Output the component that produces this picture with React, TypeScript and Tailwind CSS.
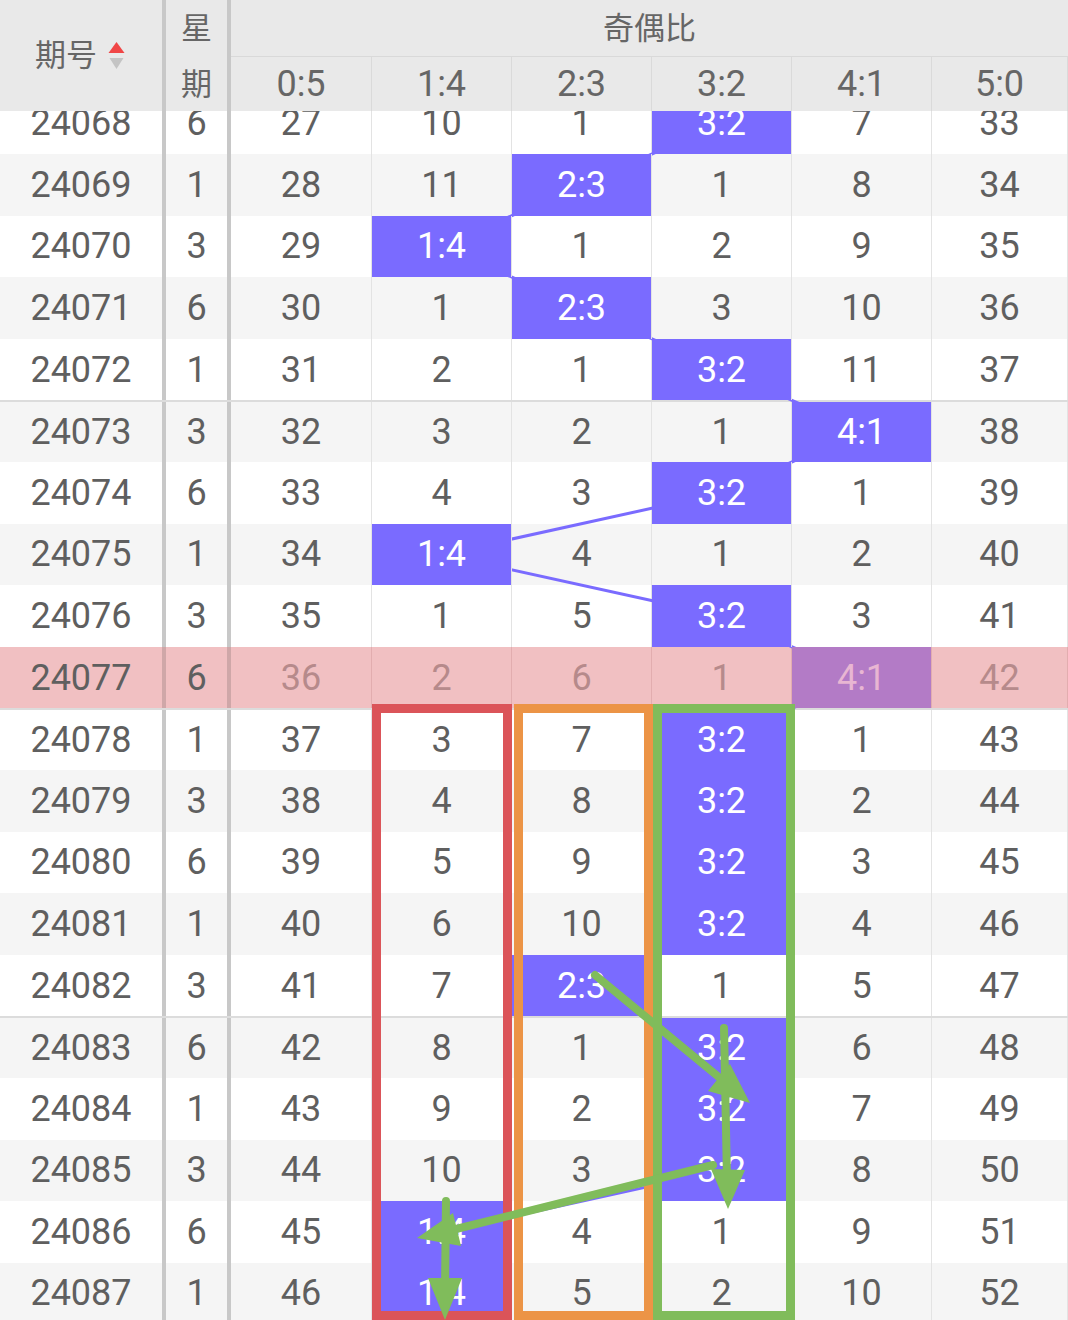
import React from 'react';

const LABELS = ['0:5', '1:4', '2:3', '3:2', '4:1', '5:0'];
const COL_W = ['w-[141px]', 'w-[140px]', 'w-[140px]', 'w-[140px]', 'w-[140px]', 'w-[136px]'];
const COL_CX = [301.5, 442, 582, 722, 862, 1000];

const ROW_H = 61.6;
const BODY_TOP = 92.4;

// null marks the highlighted ratio of the row
const ROWS: { id: string; wk: number; v: (number | null)[] }[] = [
  { id: '24068', wk: 6, v: [27, 10, 1, null, 7, 33] },
  { id: '24069', wk: 1, v: [28, 11, null, 1, 8, 34] },
  { id: '24070', wk: 3, v: [29, null, 1, 2, 9, 35] },
  { id: '24071', wk: 6, v: [30, 1, null, 3, 10, 36] },
  { id: '24072', wk: 1, v: [31, 2, 1, null, 11, 37] },
  { id: '24073', wk: 3, v: [32, 3, 2, 1, null, 38] },
  { id: '24074', wk: 6, v: [33, 4, 3, null, 1, 39] },
  { id: '24075', wk: 1, v: [34, null, 4, 1, 2, 40] },
  { id: '24076', wk: 3, v: [35, 1, 5, null, 3, 41] },
  { id: '24077', wk: 6, v: [36, 2, 6, 1, null, 42] },
  { id: '24078', wk: 1, v: [37, 3, 7, null, 1, 43] },
  { id: '24079', wk: 3, v: [38, 4, 8, null, 2, 44] },
  { id: '24080', wk: 6, v: [39, 5, 9, null, 3, 45] },
  { id: '24081', wk: 1, v: [40, 6, 10, null, 4, 46] },
  { id: '24082', wk: 3, v: [41, 7, null, 1, 5, 47] },
  { id: '24083', wk: 6, v: [42, 8, 1, null, 6, 48] },
  { id: '24084', wk: 1, v: [43, 9, 2, null, 7, 49] },
  { id: '24085', wk: 3, v: [44, 10, 3, null, 8, 50] },
  { id: '24086', wk: 6, v: [45, null, 4, 1, 9, 51] },
  { id: '24087', wk: 1, v: [46, null, 5, 2, 10, 52] },
];

const PINK_ROW = '24077';

const trendPoints = ROWS.map((r, i) => {
  const c = r.v.indexOf(null);
  return `${COL_CX[c]},${BODY_TOP + i * ROW_H + ROW_H / 2}`;
}).join(' ');

const SortArrows = () => (
  <svg width="17" height="28" viewBox="0 0 17 28">
    <polygon points="0.5,11 16.5,11 8.5,0" fill="#f04646" />
    <polygon points="1.5,16 15.5,16 8.5,27" fill="#c4c4c4" />
  </svg>
);

const Header = () => (
  <div className="relative z-10 flex h-[111px] bg-[#e9e9e9] text-[#666]">
    <div className="flex w-[166px] items-center justify-center gap-[11px] border-r-4 border-[#c8c8c8] pr-[2px]">
      <span className="text-[31px] leading-none">期号</span>
      <SortArrows />
    </div>
    <div className="flex w-[65px] flex-col border-r-4 border-[#c8c8c8] text-[31px] leading-none">
      <div className="flex h-[57px] items-center justify-center">星</div>
      <div className="flex flex-1 items-center justify-center">期</div>
    </div>
    <div className="flex flex-1 flex-col">
      <div className="flex h-[57px] items-center justify-center border-b border-[#d9d9d9] text-[31px] leading-none">
        奇偶比
      </div>
      <div className="flex flex-1">
        {LABELS.map((l, i) => (
          <div
            key={l}
            className={`${COL_W[i]} flex items-center justify-center border-r border-[#dadada] text-[36px] leading-none`}
          >
            {l}
          </div>
        ))}
      </div>
    </div>
  </div>
);

const Row = ({ row, index }: { row: (typeof ROWS)[number]; index: number }) => {
  const pink = row.id === PINK_ROW;
  const bg = pink ? 'bg-[#f1c0c2]' : index % 2 === 0 ? 'bg-white' : 'bg-[#f5f5f5]';
  const thick = pink ? 'border-[#cfa7a8]' : 'border-[#c8c8c8]';
  const thin = pink ? 'border-[#e2adaf]' : 'border-[#e3e3e3]';
  const groupTop = index % 5 === 0 && index > 0 ? 'border-t-2 border-[#dcdcdc]' : '';

  return (
    <div className={`flex h-[61.6px] ${bg} ${groupTop}`}>
      <div className={`flex w-[166px] items-center justify-center border-r-4 ${thick}`}>{row.id}</div>
      <div className={`flex w-[65px] items-center justify-center border-r-4 ${thick}`}>{row.wk}</div>
      {row.v.map((v, i) => {
        const hit = v === null;
        let cls = '';
        if (hit && pink) cls = 'relative z-[2] bg-[#b37bc6] text-[#e8b6d2]';
        else if (hit) cls = 'relative z-[2] bg-[#7a6bff] text-white';
        else if (pink) cls = 'text-[#b68a8b]';
        return (
          <div key={i} className={`${COL_W[i]} flex items-center justify-center border-r ${thin} ${cls}`}>
            {hit ? LABELS[i] : v}
          </div>
        );
      })}
    </div>
  );
};

const GREEN = '#80bc5b';

const Annotations = () => (
  <>
    <div className="absolute left-[372px] top-[704px] z-20 h-[616px] w-[140px] border-[9px] border-[#db5459]" />
    <div className="absolute left-[514px] top-[704px] z-20 h-[616px] w-[139px] border-[9px] border-[#ec9446]" />
    <div className="absolute left-[653px] top-[704px] z-20 h-[616px] w-[142px] border-[9px] border-[#80bc5b]" />
    <svg className="pointer-events-none absolute left-0 top-0 z-30" width="1068" height="1320">
      <g stroke={GREEN} strokeWidth="8" strokeLinecap="round" fill="none">
        <line x1="595" y1="975" x2="726" y2="1083" />
        <line x1="724" y1="1028" x2="727" y2="1180" />
        <line x1="713" y1="1165" x2="448" y2="1231" />
        <line x1="446" y1="1201" x2="445" y2="1290" />
      </g>
      <g fill={GREEN}>
        <polygon points="750,1103 708,1091 730,1064" />
        <polygon points="728,1209 711,1169 745,1170" />
        <polygon points="417,1238 461,1246 453,1213" />
        <polygon points="445,1320 428,1278 462,1278" />
      </g>
    </svg>
  </>
);

export default function App() {
  return (
    <div className="relative h-[1320px] w-[1068px] overflow-hidden bg-white font-[Roboto,'Noto_Sans_CJK_SC',sans-serif] text-[36px] leading-none text-[#5f5f5f]">
      <Header />
      <svg className="pointer-events-none absolute left-0 top-0 z-[1]" width="1068" height="1320">
        <polyline points={trendPoints} fill="none" stroke="#7a6bff" strokeWidth="3" />
      </svg>
      <div className="-mt-[18.6px]">
        {ROWS.map((r, i) => (
          <Row key={r.id} row={r} index={i} />
        ))}
      </div>
      <Annotations />
    </div>
  );
}
